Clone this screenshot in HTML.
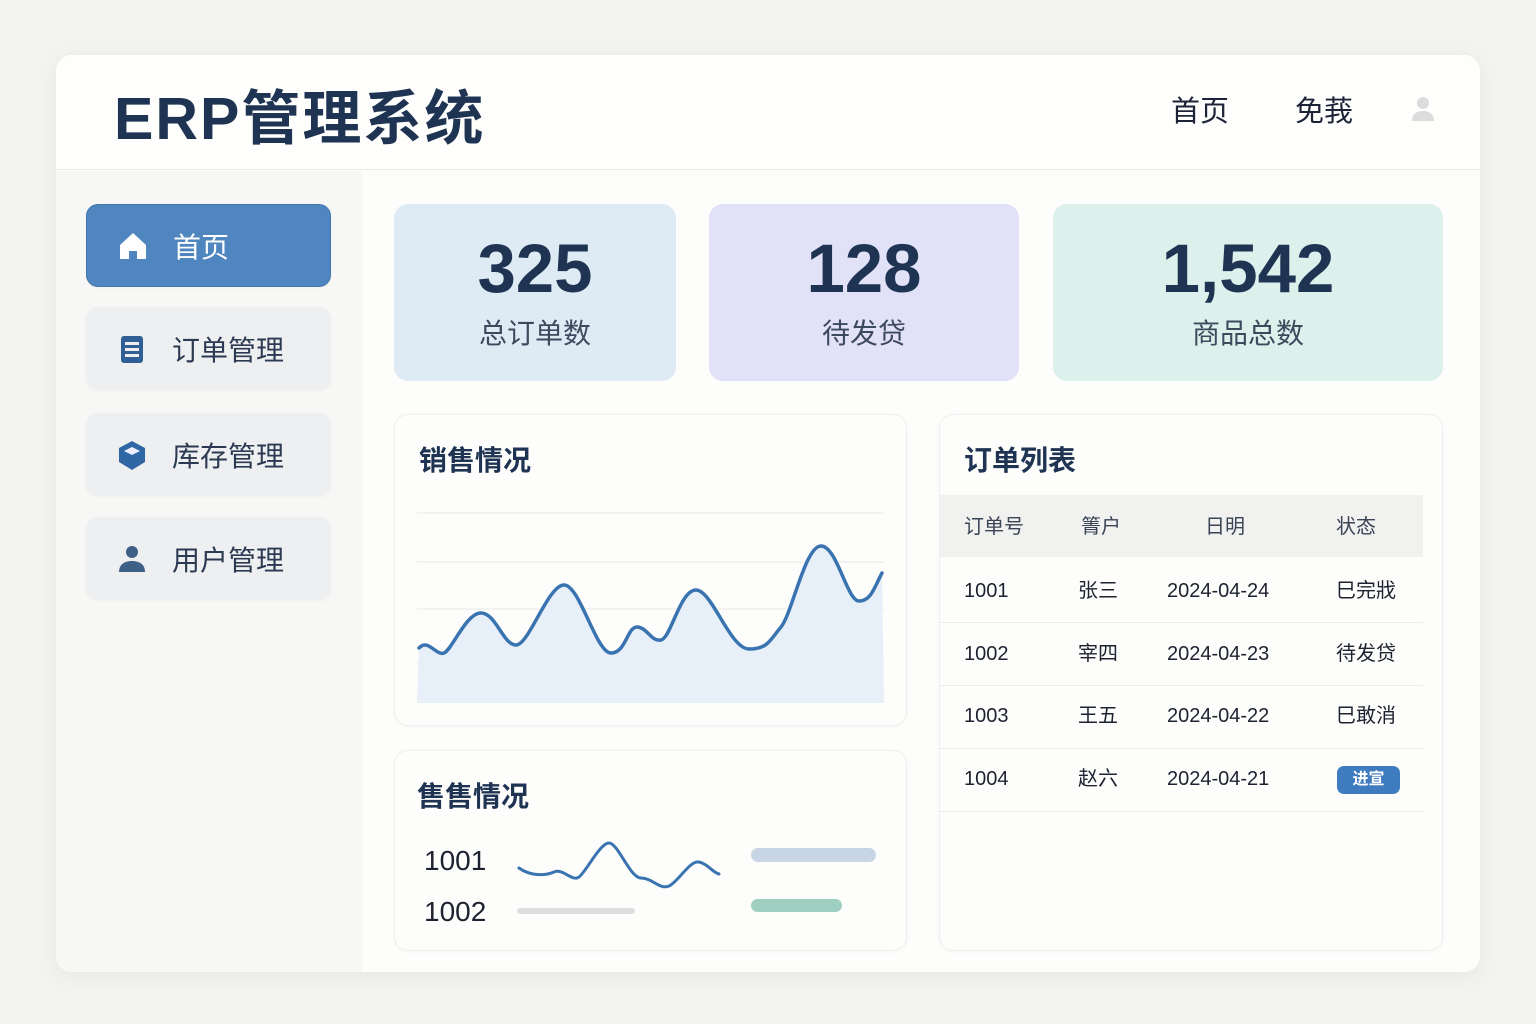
<!DOCTYPE html>
<html><head><meta charset="utf-8"><style>
*{margin:0;padding:0;box-sizing:border-box}
body{width:1536px;height:1024px;background:#f3f3f1;font-family:"Liberation Sans","Noto Sans CJK SC",sans-serif;position:relative;overflow:hidden;color:#1f3352}
.abs{position:absolute}
.main{left:56px;top:55px;width:1424px;height:917px;background:#fdfdfc;border-radius:16px;box-shadow:0 4px 24px rgba(0,0,0,.06);overflow:hidden}
.hdr{left:0;top:0;width:1424px;height:115px;border-bottom:1px solid #e8e8e6;background:#fefefd}
.side{left:0;top:116px;width:306px;height:801px;background:#f7f7f5}
.nav{left:30px;width:245px;height:83px;border-radius:12px;background:#eeeff0;font-size:28px;color:#2b3a52;display:flex;align-items:center;padding-left:30px;box-shadow:0 1px 3px rgba(0,0,0,.04)}
.nav span{margin-left:24px}
.stat{top:149px;height:177px;border-radius:14px;text-align:center}
.stat b{display:block;font-size:69px;font-weight:700;margin-top:28px;line-height:74px;color:#1f3352}
.stat i{display:block;font-style:normal;font-size:28px;color:#3d4a5e;margin-top:6px}
.card{background:#fdfdfc;border:1px solid #efefed;border-radius:14px;box-shadow:0 1px 4px rgba(0,0,0,.03)}
.ct{font-size:28px;font-weight:700;color:#1f3352}
.td{position:absolute;font-size:20px;color:#1d2230;line-height:24px;height:24px}
</style></head><body>
<div class="abs main">
 <div class="abs hdr">
  <div class="abs" style="left:58px;top:16px;font-size:59px;font-weight:700;color:#1f3352;letter-spacing:2px">ERP管理系统</div>
  <div class="abs" style="left:1115px;top:33px;font-size:29px;color:#1d2438">首页</div>
  <div class="abs" style="left:1239px;top:33px;font-size:29px;color:#1d2438">免莪</div>
  <svg class="abs" style="left:1354px;top:40px" width="26" height="28" viewBox="0 0 26 28"><circle cx="13" cy="8" r="6" fill="#dcdcdc"/><path d="M2 26c0-7 5-10 11-10s11 3 11 10z" fill="#dcdcdc"/></svg>
 </div>
 <div class="abs side">
  <div class="abs nav" style="top:33px;background:#4f86c0;color:#fff;border:1px solid #4277b0">
   <svg width="32" height="32" viewBox="0 0 32 32"><path d="M16 3L3 15v14h9v-8h8v8h9V15z" fill="#fff"/></svg><span>首页</span></div>
  <div class="abs nav" style="top:136px"><svg width="32" height="32" viewBox="0 0 32 32"><rect x="5" y="3" width="22" height="27" rx="3" fill="#2f5f96"/><rect x="9" y="9" width="14" height="3" fill="#eee"/><rect x="9" y="15" width="14" height="3" fill="#eee"/><rect x="9" y="21" width="14" height="3" fill="#eee"/></svg><span>订单管理</span></div>
  <div class="abs nav" style="top:242px"><svg width="32" height="32" viewBox="0 0 32 32"><path d="M16 2L29 9v14l-13 8L3 23V9z" fill="#2f66a4"/><path d="M16 8l8 4-8 4-8-4z" fill="#eef"/></svg><span>库存管理</span></div>
  <div class="abs nav" style="top:346px"><svg width="32" height="32" viewBox="0 0 32 32"><circle cx="16" cy="9" r="6" fill="#3e5f86"/><path d="M3 29c0-8 6-11 13-11s13 3 13 11z" fill="#3e5f86"/></svg><span>用户管理</span></div>
 </div>
 <div class="abs stat" style="left:338px;width:282px;background:#deebf5"><b>325</b><i>总订单数</i></div>
 <div class="abs stat" style="left:653px;width:310px;background:#e1e1f8"><b>128</b><i>待发贷</i></div>
 <div class="abs stat" style="left:997px;width:390px;background:#dcf1ec"><b>1,542</b><i>商品总数</i></div>

 <div class="abs card" style="left:338px;top:359px;width:513px;height:312px">
  <div class="abs ct" style="left:24px;top:24px">销售情况</div>
 </div>
 <svg class="abs" style="left:0;top:0" width="1424" height="917" viewBox="56 55 1424 917">
  <g stroke="#e6e6e6" stroke-width="1"><line x1="417" y1="513" x2="884" y2="513"/><line x1="417" y1="562" x2="884" y2="562"/><line x1="417" y1="609" x2="884" y2="609"/><line x1="417" y1="663" x2="884" y2="663"/></g>
  <path d="M419 648C428 638 436 656 444 653S466 613 481 613 503 645 516 645 548 585 564 585 596 653 611 653 627 627 637 627 651 642 661 640 680 590 696 590 730 649 749 649 770 640 781 627 805 546 821 546 847 601 859 601 874 588 882 573L884 703 417 703Z" fill="#e3edf7" opacity=".85"/>
  <path d="M419 648C428 638 436 656 444 653S466 613 481 613 503 645 516 645 548 585 564 585 596 653 611 653 627 627 637 627 651 642 661 640 680 590 696 590 730 649 749 649 770 640 781 627 805 546 821 546 847 601 859 601 874 588 882 573" fill="none" stroke="#3a74b0" stroke-width="3.5" stroke-linecap="round"/>
 </svg>

 <div class="abs card" style="left:338px;top:695px;width:513px;height:201px">
  <div class="abs ct" style="left:22px;top:24px">售售情况</div>
  <div class="abs" style="left:29px;top:94px;font-size:28px;color:#1d2230">1001</div>
  <div class="abs" style="left:29px;top:145px;font-size:28px;color:#1d2230">1002</div>
 </div>
 <svg class="abs" style="left:0;top:0" width="1424" height="917" viewBox="56 55 1424 917">
  <path d="M519 868C530 876 545 876 554 872S572 882 579 877 600 843 609 843 630 878 641 878 660 890 669 886 690 860 699 862 712 872 719 874" fill="none" stroke="#3a74b0" stroke-width="3" stroke-linecap="round"/>
  <rect x="517" y="908" width="118" height="6" rx="3" fill="#dcdedf"/>
  <rect x="751" y="848" width="125" height="14" rx="7" fill="#c8d5e5"/>
  <rect x="751" y="899" width="91" height="13" rx="6.5" fill="#9ecfc0"/>
 </svg>

 <div class="abs card" style="left:883px;top:359px;width:504px;height:537px;overflow:hidden">
  <div class="abs ct" style="left:24px;top:24px">订单列表</div>
  <div class="abs" style="left:0;top:80px;width:483px;height:62px;background:#f1f1f0"></div>
  <div class="td" style="left:24px;top:100px;color:#3a4456">订单号</div>
  <div class="td" style="left:141px;top:100px;color:#3a4456">箐户</div>
  <div class="td" style="left:265px;top:100px;color:#3a4456">日明</div>
  <div class="td" style="left:396px;top:100px;color:#3a4456">状态</div>
  <div class="abs" style="left:0;top:207px;width:483px;border-top:1px solid #ececea"></div>
  <div class="abs" style="left:0;top:270px;width:483px;border-top:1px solid #ececea"></div>
  <div class="abs" style="left:0;top:333px;width:483px;border-top:1px solid #ececea"></div>
  <div class="abs" style="left:0;top:396px;width:483px;border-top:1px solid #ececea"></div>
  <div class="td" style="left:24px;top:164px">1001</div><div class="td" style="left:138px;top:164px">张三</div><div class="td" style="left:227px;top:164px">2024-04-24</div><div class="td" style="left:396px;top:164px">巳完戕</div>
  <div class="td" style="left:24px;top:227px">1002</div><div class="td" style="left:138px;top:227px">宰四</div><div class="td" style="left:227px;top:227px">2024-04-23</div><div class="td" style="left:396px;top:227px">待发贷</div>
  <div class="td" style="left:24px;top:289px">1003</div><div class="td" style="left:138px;top:289px">王五</div><div class="td" style="left:227px;top:289px">2024-04-22</div><div class="td" style="left:396px;top:289px">巳敢消</div>
  <div class="td" style="left:24px;top:352px">1004</div><div class="td" style="left:138px;top:352px">赵六</div><div class="td" style="left:227px;top:352px">2024-04-21</div>
  <div class="abs" style="left:397px;top:351px;width:63px;height:28px;border-radius:7px;background:#3f7bbf;color:#fff;font-size:16px;font-weight:700;text-align:center;line-height:28px">进宣</div>
 </div>
</div>
</body></html>
